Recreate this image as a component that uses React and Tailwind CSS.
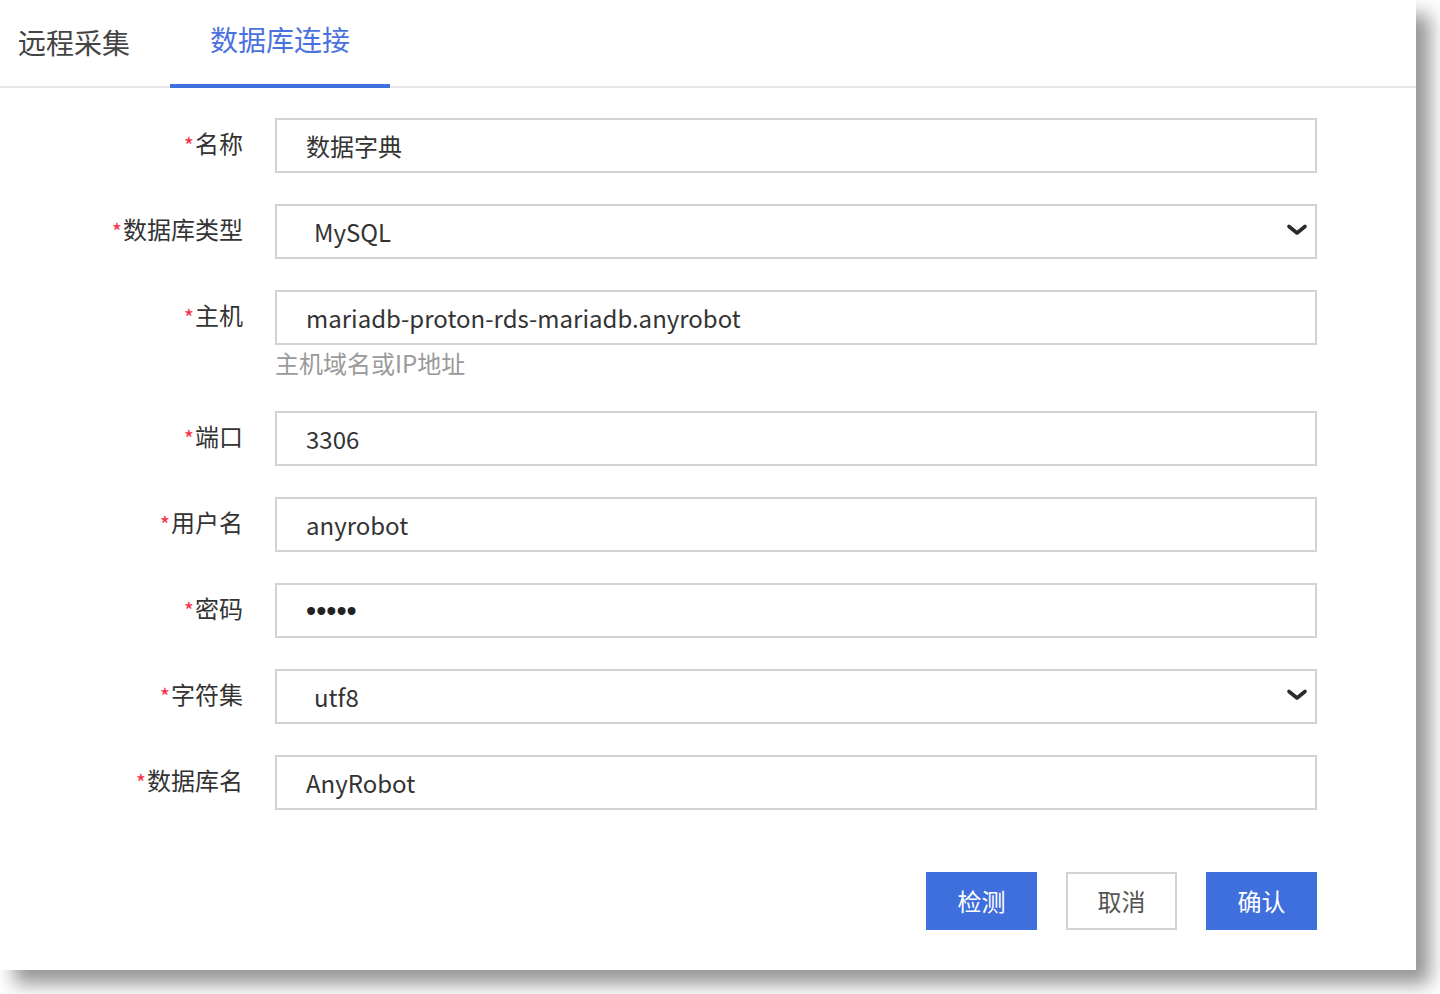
import React from "react";

const font = { fontFamily: '"Noto Sans CJK SC", "Noto Sans", sans-serif' };

function Chevron() {
  return (
    <svg width="22" height="14" viewBox="0 0 22 14" className="absolute right-[7px] top-[calc(50%-2px)] -translate-y-1/2">
      <polyline points="3,3.5 11,10 19,3.5" fill="none" stroke="#2b2b2b" strokeWidth="3.6" strokeLinecap="round" strokeLinejoin="round" />
    </svg>
  );
}

function Field({ label, value, select, hint, dots }) {
  return (
    <div className="flex items-start">
      <div className="w-[243px] h-[54px] flex items-center justify-end text-[24px] text-[#333] leading-none pb-[4px]">
        <span className="text-[#f5314a] text-[22px] self-start mt-[15px] mr-[1px]">*</span>
        <span>{label}</span>
      </div>
      <div className="ml-[32px] w-[1042px] flex flex-col">
        <div className="relative h-[55px] border-2 border-[#d3d3d3] bg-white flex items-center text-[24px] text-[#333]">
          {dots ? (
            <span className="pl-[29px] font-['Liberation_Sans',sans-serif] text-[29px] leading-none pt-[2px] text-[#222]">•••••</span>
          ) : (
            <span className={select ? "pl-[37px]" : "pl-[29px]"}>{value}</span>
          )}
          {select && <Chevron />}
        </div>
        {hint && <div className="h-[36px] leading-[36px] text-[24px] text-[#9a9a9a]">{hint}</div>}
      </div>
    </div>
  );
}

export default function App() {
  return (
    <div className="w-[1440px] h-[994px] bg-white overflow-hidden" style={font}>
      <div className="w-[1416px] h-[970px] bg-white shadow-[14px_14px_18px_rgba(0,0,0,0.42)] flex flex-col">
        <div className="h-[88px] border-b-2 border-[#e8e8e8] flex items-end">
          <div className="pl-[18px] pr-[40px] h-[88px] flex items-center text-[28px] text-[#444] pt-[0px]">远程采集</div>
          <div className="w-[220px] h-[88px] flex flex-col items-center">
            <div className="flex-1 flex items-center text-[28px] text-[#4a72de] pb-[4px]">数据库连接</div>
            <div className="h-[4px] w-full bg-[#3f6fdc] -mb-[2px]"></div>
          </div>
        </div>
        <div className="pt-[30px] flex flex-col gap-[31px]">
          <Field label="名称" value="数据字典" />
          <Field label="数据库类型" value="MySQL" select />
          <div className="-mb-[1px]">
            <Field label="主机" value="mariadb-proton-rds-mariadb.anyrobot" hint="主机域名或IP地址" />
          </div>
          <Field label="端口" value="3306" />
          <Field label="用户名" value="anyrobot" />
          <Field label="密码" dots />
          <Field label="字符集" value="utf8" select />
          <Field label="数据库名" value="AnyRobot" />
        </div>
        <div className="mt-[62px] pr-[99px] flex justify-end gap-[29px] text-[24px]">
          <div className="w-[111px] h-[58px] bg-[#3f6fdc] text-white flex items-center justify-center">检测</div>
          <div className="w-[111px] h-[58px] border-2 border-[#d3d3d3] text-[#555] flex items-center justify-center">取消</div>
          <div className="w-[111px] h-[58px] bg-[#3f6fdc] text-white flex items-center justify-center">确认</div>
        </div>
      </div>
    </div>
  );
}
